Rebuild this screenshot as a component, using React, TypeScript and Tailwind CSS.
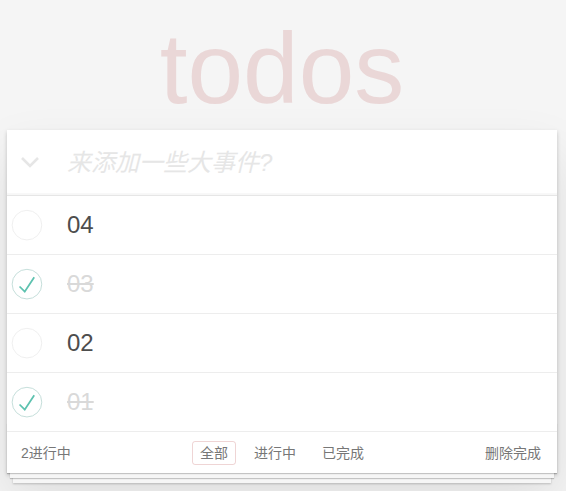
import { useState } from 'react';

type Todo = { id: number; title: string; done: boolean };

const FONT = '[font-family:"Liberation_Sans","Noto_Sans_CJK_SC",sans-serif]';

function CheckIcon({ done }: { done: boolean }) {
  return (
    <svg width="40" height="40" viewBox="-10 -18 100 135" className="shrink-0">
      <circle cx="50" cy="50" r="50" fill="none" stroke={done ? '#bddad5' : '#ededed'} strokeWidth="3" />
      {done && <path fill="#5dc2af" d="M72 25L42 71 27 56l-4 4 20 20 34-52z" />}
    </svg>
  );
}

export default function App() {
  const [todos, setTodos] = useState<Todo[]>([
    { id: 4, title: '04', done: false },
    { id: 3, title: '03', done: true },
    { id: 2, title: '02', done: false },
    { id: 1, title: '01', done: true },
  ]);
  const [filter, setFilter] = useState<'all' | 'active' | 'done'>('all');
  const [text, setText] = useState('');

  const left = todos.filter((t) => !t.done).length;
  const shown = todos.filter((t) => (filter === 'all' ? true : filter === 'active' ? !t.done : t.done));

  function add() {
    if (!text.trim()) return;
    setTodos([{ id: Date.now(), title: text.trim(), done: false }, ...todos]);
    setText('');
  }

  return (
    <div className={`min-h-screen bg-[#f5f5f5] text-[#4d4d4d] text-sm ${FONT}`}>
      <div className="ml-[7px] w-[550px]">
        <h1 className="h-[130px] pt-[18px] text-center text-[100px] leading-[100px] font-thin text-[rgba(175,47,47,0.15)]">todos</h1>

        <section className="relative bg-white shadow-[0_2px_4px_0_rgba(0,0,0,0.2),0_25px_50px_0_rgba(0,0,0,0.1)]">
          <header className="flex h-[65px] items-center shadow-[inset_0_-2px_1px_rgba(0,0,0,0.03)]">
            <button className="flex w-[60px] justify-start pl-[13px] pb-px" onClick={() => setTodos(todos.map((t) => ({ ...t, done: left > 0 })))}>
              <svg width="20" height="12" viewBox="0 0 20 12">
                <path d="M2 2l8 8 8-8" fill="none" stroke="#e6e6e6" strokeWidth="2.6" />
              </svg>
            </button>
            <input
              value={text}
              onChange={(e) => setText(e.target.value)}
              onKeyDown={(e) => e.key === 'Enter' && add()}
              placeholder="来添加一些大事件?"
              className="h-full flex-1 bg-transparent pr-4 text-2xl outline-none placeholder:italic placeholder:text-[#e6e6e6]"
            />
          </header>

          <ul className="border-t border-[#e6e6e6]">
            {shown.map((t) => (
              <li key={t.id} className="flex h-[59px] items-center border-b border-[#ededed]">
                <button className="flex w-[60px] justify-start -ml-[3px] mr-[3px]" onClick={() => setTodos(todos.map((x) => (x.id === t.id ? { ...x, done: !x.done } : x)))}>
                  <CheckIcon done={t.done} />
                </button>
                <span className={`text-2xl leading-[1.2] ${t.done ? 'text-[#d9d9d9] line-through' : 'text-[#4d4d4d]'}`}>{t.title}</span>
              </li>
            ))}
          </ul>

          <footer className="relative grid h-[41px] grid-cols-[1fr_auto_1fr] items-center px-[14px] text-[#777] before:absolute before:inset-x-0 before:bottom-0 before:h-[50px] before:overflow-hidden before:content-[''] before:shadow-[0_1px_1px_rgba(0,0,0,0.2),0_8px_0_-3px_#f6f6f6,0_9px_1px_-3px_rgba(0,0,0,0.2),0_16px_0_-6px_#f6f6f6,0_17px_2px_-6px_rgba(0,0,0,0.2)]">
            <span className="relative">{left}进行中</span>
            <div className="relative flex gap-[10px]">
              {([['all', '全部'], ['active', '进行中'], ['done', '已完成']] as const).map(([k, label]) => (
                <button
                  key={k}
                  onClick={() => setFilter(k)}
                  className={`rounded-[3px] border px-[7px] py-[3px] leading-[16px] ${filter === k ? 'border-[rgba(175,47,47,0.2)]' : 'border-transparent'}`}
                >
                  {label}
                </button>
              ))}
            </div>
            <button className="relative mr-[2px] justify-self-end" onClick={() => setTodos(todos.filter((t) => !t.done))}>删除完成</button>
          </footer>
        </section>
      </div>
    </div>
  );
}
